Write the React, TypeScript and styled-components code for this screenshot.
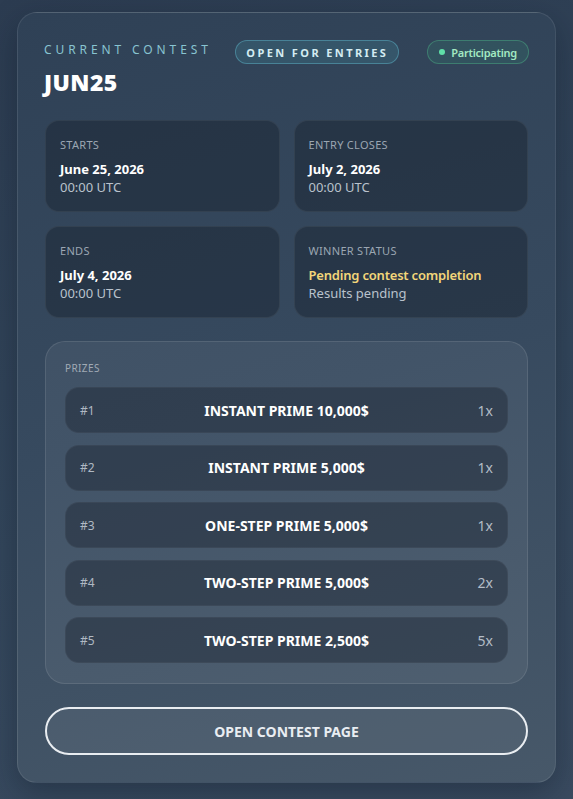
import React from "react";
import styled, { createGlobalStyle } from "styled-components";

const Global = createGlobalStyle`
  html, body { margin: 0; padding: 0; }
  body {
    width: 573px;
    height: 799px;
    overflow: hidden;
    background: linear-gradient(160deg, #2c3c51 0%, #33465b 55%, #3a4b60 100%);
    font-family: "Noto Sans", "Open Sans", sans-serif;
    color: #fff;
  }
`;

const Page = styled.div`
  padding: 12px 17px 17px 17px;
`;

const Card = styled.section`
  box-sizing: border-box;
  border-radius: 20px;
  border: 1px solid rgba(255, 255, 255, 0.09);
  background: linear-gradient(165deg, #2f4156 0%, #374a5f 50%, #475869 100%);
  box-shadow: 0 10px 30px rgba(10, 20, 35, 0.35);
  padding: 27px 26px 27px 26px;
  display: flex;
  flex-direction: column;
`;

const Header = styled.header`
  display: flex;
  justify-content: space-between;
  align-items: flex-start;
`;

const TitleBlock = styled.div`
  display: flex;
  flex-direction: column;
  gap: 11px;
  padding-top: 2px;
`;

const Eyebrow = styled.div`
  font-size: 12px;
  letter-spacing: 3.9px;
  color: #88c4d1;
  line-height: 16px;
`;

const Title = styled.h1`
  margin: 0;
  font-size: 23px;
  font-weight: 900;
  line-height: 26px;
  letter-spacing: 0.4px;
  color: #ffffff;
`;

const Pills = styled.div`
  display: flex;
  gap: 28px;
`;

const Pill = styled.span<{ $tone: "teal" | "green" }>`
  box-sizing: border-box;
  height: 24px;
  display: inline-flex;
  align-items: center;
  gap: 6px;
  border-radius: 999px;
  padding: 0 ${(p) => (p.$tone === "teal" ? "10px" : "11px")};
  font-size: 11px;
  font-weight: ${(p) => (p.$tone === "teal" ? 700 : 600)};
  letter-spacing: ${(p) => (p.$tone === "teal" ? "2.4px" : "-0.25px")};
  color: ${(p) => (p.$tone === "teal" ? "#d3ecf2" : "#a3e9c2")};
  background: ${(p) =>
    p.$tone === "teal" ? "rgba(70, 150, 170, 0.22)" : "rgba(60, 170, 130, 0.14)"};
  border: 1px solid
    ${(p) => (p.$tone === "teal" ? "rgba(90, 170, 190, 0.55)" : "rgba(80, 190, 140, 0.4)")};
`;

const Dot = styled.span`
  width: 6px;
  height: 6px;
  border-radius: 50%;
  background: #5fe0a8;
`;

const InfoGrid = styled.div`
  margin-top: 25px;
  display: grid;
  grid-template-columns: 1fr 1fr;
  gap: 14px;
  padding: 0 1px;
`;

const InfoBox = styled.div`
  box-sizing: border-box;
  height: 92px;
  border-radius: 14px;
  background: rgba(22, 32, 44, 0.42);
  border: 1px solid rgba(255, 255, 255, 0.06);
  padding: 16px 14px;
  display: flex;
  flex-direction: column;
`;

const InfoLabel = styled.div`
  font-size: 11px;
  line-height: 15px;
  color: #9ba6b2;
  text-transform: uppercase;
  letter-spacing: 0.3px;
`;

const InfoValue = styled.div<{ $accent?: boolean }>`
  margin-top: 8px;
  font-size: 13px;
  line-height: 18px;
  font-weight: ${(p) => (p.$accent ? 600 : 700)};
  letter-spacing: ${(p) => (p.$accent ? "-0.2px" : "0")};
  color: ${(p) => (p.$accent ? "#f3d67a" : "#ffffff")};
`;

const InfoSub = styled.div`
  font-size: 13px;
  line-height: 18px;
  color: #b9c2cc;
`;

const Prizes = styled.div`
  margin: 23px 1px 0 1px;
  box-sizing: border-box;
  border-radius: 20px;
  background: rgba(255, 255, 255, 0.06);
  border: 1px solid rgba(255, 255, 255, 0.1);
  padding: 19px 19px 20px 19px;
  display: flex;
  flex-direction: column;
`;

const PrizesLabel = styled.div`
  font-size: 10px;
  line-height: 14px;
  color: #a0aab5;
  letter-spacing: 0.4px;
  margin-bottom: 12px;
`;

const PrizeList = styled.div`
  display: flex;
  flex-direction: column;
  gap: 11.5px;
`;

const PrizeRow = styled.div`
  box-sizing: border-box;
  height: 46px;
  border-radius: 14px;
  background: rgba(28, 38, 52, 0.45);
  border: 1px solid rgba(255, 255, 255, 0.04);
  display: grid;
  grid-template-columns: 60px 1fr 60px;
  align-items: center;
  padding: 0 14px;
`;

const Rank = styled.span`
  font-size: 12px;
  color: #b0b9c3;
`;

const PrizeName = styled.span`
  text-align: center;
  font-size: 14px;
  font-weight: 700;
  color: #ffffff;
`;

const Qty = styled.span`
  text-align: right;
  font-size: 14px;
  color: #b3bcc6;
`;

const Button = styled.button`
  margin: 23px 1px 0 1px;
  height: 48px;
  flex-shrink: 0;
  border-radius: 999px;
  border: 2px solid #e9edf1;
  background: rgba(255, 255, 255, 0.06);
  color: #e9edf2;
  font-family: inherit;
  font-size: 14px;
  font-weight: 700;
  cursor: pointer;
`;

const info = [
  { label: "Starts", value: "June 25, 2026", sub: "00:00 UTC" },
  { label: "Entry closes", value: "July 2, 2026", sub: "00:00 UTC" },
  { label: "Ends", value: "July 4, 2026", sub: "00:00 UTC" },
  { label: "Winner status", value: "Pending contest completion", sub: "Results pending", accent: true },
];

const prizes = [
  { rank: "#1", name: "INSTANT PRIME 10,000$", qty: "1x" },
  { rank: "#2", name: "INSTANT PRIME 5,000$", qty: "1x" },
  { rank: "#3", name: "ONE-STEP PRIME 5,000$", qty: "1x" },
  { rank: "#4", name: "TWO-STEP PRIME 5,000$", qty: "2x" },
  { rank: "#5", name: "TWO-STEP PRIME 2,500$", qty: "5x" },
];

export default function App() {
  return (
    <>
      <Global />
      <Page>
        <Card>
          <Header>
            <TitleBlock>
              <Eyebrow>CURRENT CONTEST</Eyebrow>
              <Title>JUN25</Title>
            </TitleBlock>
            <Pills>
              <Pill $tone="teal">OPEN FOR ENTRIES</Pill>
              <Pill $tone="green">
                <Dot />
                Participating
              </Pill>
            </Pills>
          </Header>

          <InfoGrid>
            {info.map((i) => (
              <InfoBox key={i.label}>
                <InfoLabel>{i.label}</InfoLabel>
                <InfoValue $accent={i.accent}>{i.value}</InfoValue>
                <InfoSub>{i.sub}</InfoSub>
              </InfoBox>
            ))}
          </InfoGrid>

          <Prizes>
            <PrizesLabel>PRIZES</PrizesLabel>
            <PrizeList>
              {prizes.map((p) => (
                <PrizeRow key={p.rank}>
                  <Rank>{p.rank}</Rank>
                  <PrizeName>{p.name}</PrizeName>
                  <Qty>{p.qty}</Qty>
                </PrizeRow>
              ))}
            </PrizeList>
          </Prizes>

          <Button>OPEN CONTEST PAGE</Button>
        </Card>
      </Page>
    </>
  );
}
